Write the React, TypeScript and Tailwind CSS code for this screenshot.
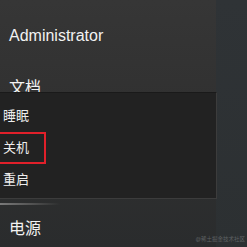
const MENU_ITEMS = ["睡眠", "关机", "重启"];

export default function App() {
  return (
    <div
      className="relative flex h-[247px] w-[247px] overflow-hidden bg-[#2e3235]"
      style={{ fontFamily: '"Liberation Sans", "Noto Sans CJK SC", sans-serif' }}
    >
      {/* start menu column */}
      <div className="relative flex w-[216px] flex-col bg-gradient-to-b from-[#363636] via-[#303030] to-[#2a2c2d] pl-[9px] text-white">
        <div className="mt-[26px] text-[16px] leading-[20px] text-[#f2f2f2]">Administrator</div>
        <div className="mt-[32px] text-[16px] leading-[20px] text-[#f2f2f2]">文档</div>
        <div className="mt-[105px] -ml-[9px] h-[2px] w-[60px] bg-gradient-to-r from-[#7a7a7a] via-[#555555] to-transparent" />
        <div className="mt-[14px] text-[16px] leading-[20px] text-[#f2f2f2]">电源</div>
      </div>
      <div className="flex-1 bg-gradient-to-b from-[#2f3336] to-[#2c3032]" />

      {/* power flyout */}
      <div className="absolute left-[-2px] top-[92px] h-[107px] w-[219px] border border-[#3c3c3c] border-t-[#1a1a1a] bg-[#222222] pt-[7px]">
        {MENU_ITEMS.map((label) => (
          <div key={label} className="relative flex h-[32px] items-center pl-[4px] text-[13px] text-[#ededed]">
            {label}
            {label === "关机" && (
              <span className="absolute -left-[4px] top-[0px] h-[32px] w-[51px] border-2 border-[#e0202a]" />
            )}
          </div>
        ))}
      </div>

      <span className="absolute bottom-[5px] right-[2px] text-[5.5px] leading-none text-[#5e6163]">
        @稀土掘金技术社区
      </span>
    </div>
  );
}
